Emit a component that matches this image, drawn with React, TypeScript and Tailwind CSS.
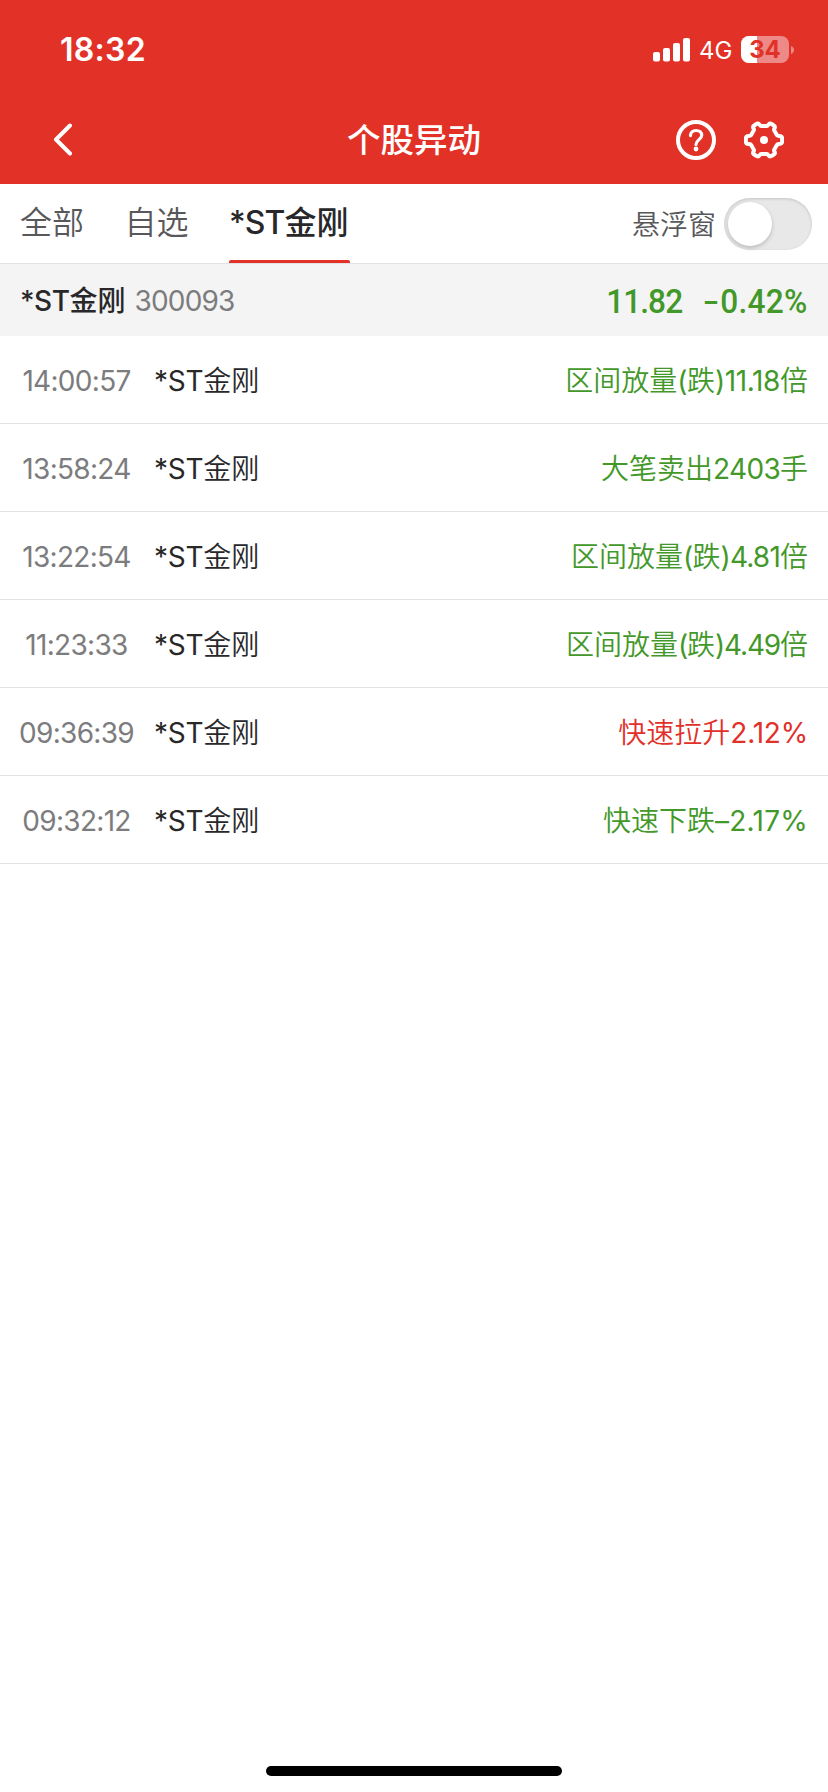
import React from "react";

type Movement = { time: string; name: string; event: string; rising: boolean; tracking: string };

const movements: Movement[] = [
  { time: "14:00:57", name: "*ST金刚", event: "区间放量(跌)11.18倍", rising: false, tracking: "tracking-[-0.4px]" },
  { time: "13:58:24", name: "*ST金刚", event: "大笔卖出2403手", rising: false, tracking: "tracking-[-0.7px]" },
  { time: "13:22:54", name: "*ST金刚", event: "区间放量(跌)4.81倍", rising: false, tracking: "tracking-[-0.8px]" },
  { time: "11:23:33", name: "*ST金刚", event: "区间放量(跌)4.49倍", rising: false, tracking: "tracking-[-1.2px]" },
  { time: "09:36:39", name: "*ST金刚", event: "快速拉升2.12%", rising: true, tracking: "tracking-[-0.2px]" },
  { time: "09:32:12", name: "*ST金刚", event: "快速下跌–2.17%", rising: false, tracking: "tracking-[0.25px]" },
];

/** Styles the Latin runs of a mixed string and leaves the Chinese runs alone. */
function Mixed({ text, latin }: { text: string; latin: string }) {
  return (
    <>
      {text.split(/([^\u4e00-\u9fff]+)/).map((run, i) =>
        i % 2 ? (
          <span key={i} className={latin}>
            {run}
          </span>
        ) : (
          run
        ),
      )}
    </>
  );
}

function StatusBar() {
  return (
    <div className="flex h-[96px] items-center justify-between pl-[60px] pr-[34px] pt-[3px] text-white">
      <span className="text-[32px] font-semibold leading-none tracking-[0.3px]">18:32</span>
      <div className="flex items-center">
        <svg width="38" height="24" viewBox="0 0 38 24" fill="#fff">
          <rect x="0" y="14" width="7" height="9.500" rx="2" />
          <rect x="10" y="10" width="7" height="13.500" rx="2" />
          <rect x="20" y="5" width="7" height="18.500" rx="2" />
          <rect x="30" y="0" width="7" height="23.500" rx="2" />
        </svg>
        <span className="ml-[8px] w-[34px] pt-[2px] text-[24px] leading-none">4G</span>
        <div className="relative ml-[8px] flex h-[27px] w-[48px] items-center justify-center overflow-hidden rounded-[8px] bg-[#ed8a87]">
          <div className="absolute inset-y-0 left-0 w-[16px] bg-white" />
          <span className="relative text-[24px] font-bold leading-none text-[#e23228]">34</span>
        </div>
        <svg className="ml-[2px]" width="3" height="8" viewBox="0 0 3 8">
          <path d="M0 0c2 .8 3 2.300 3 4s-1 3.200-3 4z" fill="#ed8a87" />
        </svg>
      </div>
    </div>
  );
}

function NavBar() {
  return (
    <div className="grid h-[88px] grid-cols-[1fr_auto_1fr] items-center text-white">
      <svg className="ml-[52px]" width="22" height="34" viewBox="0 0 22 34" fill="none">
        <path d="M18 2.500 4 16.500l14 14" stroke="#fff" strokeWidth="4" strokeLinecap="round" strokeLinejoin="round" />
      </svg>
      <h1 className="pt-[2px] text-[33.500px] font-medium leading-none">个股异动</h1>
      <div className="flex items-center justify-end gap-[28px] pr-[44px]">
        <svg width="40" height="40" viewBox="0 0 40 40" fill="none" stroke="#fff">
          <circle cx="20" cy="20" r="18" strokeWidth="4" />
          <path
            d="M14.500 15.600c0-3.200 2.300-5.100 5.600-5.100s5.600 1.900 5.600 4.800c0 4.300-5.700 4.400-5.700 9.200"
            strokeWidth="3.200"
            strokeLinecap="round"
          />
          <circle cx="20" cy="29" r="2.400" fill="#fff" stroke="none" />
        </svg>
        <svg width="40" height="40" viewBox="0 0 40 40" fill="none" stroke="#fff">
          <path
            d="M17 6h6c1.200 0 1.500-2.400 3-2.400 1.200 0 4.600 1.900 4.900 3 .4 1.300-1.300 2.400-.8 3.500l2.900 5.200c.7 1.100 4.500.2 4.900 2 .2 1 .2 4.400 0 5.400-.4 1.800-4.200.9-4.900 2l-2.900 5.200c-.5 1.100 1.200 2.200.8 3.500-.3 1.100-3.700 3-4.900 3-1.500 0-1.800-2.400-3-2.400h-6c-1.200 0-1.500 2.400-3 2.400-1.200 0-4.600-1.900-4.900-3-.4-1.300 1.300-2.400.8-3.500l-2.900-5.200c-.7-1.100-4.500-.2-4.900-2-.2-1-.2-4.400 0-5.400.4-1.800 4.200-.9 4.900-2l2.900-5.200c.5-1.100-1.200-2.200-.8-3.500.3-1.100 3.700-3 4.900-3 1.500 0 1.800 2.400 3 2.400z"
            strokeWidth="4"
            strokeLinejoin="round"
          />
          <circle cx="20" cy="20" r="4" fill="#fff" stroke="none" />
        </svg>
      </div>
    </div>
  );
}

function Tabs() {
  return (
    <div className="flex h-[80px] border-b border-[#e2e2e4] pl-[20px] pr-[16px] text-[#58585a]">
      <nav className="flex flex-1 gap-[40.500px] text-[32px] leading-[78px]">
        <span className="font-[350]">全部</span>
        <span className="font-[350]">自选</span>
        <span className="relative font-medium text-[#28282a]">
          <Mixed text="*ST金刚" latin="tracking-[-0.9px]" />
          <i className="absolute bottom-0 left-0 h-[3px] w-[121px] rounded-t-[2px] bg-[#e23228]" />
        </span>
      </nav>
      <div className="flex items-center gap-[8px]">
        <span className="pt-[2px] text-[28px] font-[350] leading-none">悬浮窗</span>
        <div className="h-[52px] w-[88px] rounded-full bg-[#e8e8e8] px-[4px] py-[4px] shadow-[inset_0_1px_3px_rgba(0,0,0,0.16)]">
          <div className="size-[44px] rounded-full bg-white shadow-[0_2px_4px_rgba(0,0,0,0.2)]" />
        </div>
      </div>
    </div>
  );
}

function Quote() {
  return (
    <div className="flex h-[72px] items-center bg-[#f4f4f4] pl-[20px] pr-[20px] pt-[2px] leading-none">
      <span className="text-[28px] font-medium text-[#28282a]">
        <Mixed text="*ST金刚" latin="tracking-[-0.5px]" />
      </span>
      <span className="ml-[9px] flex-1 text-[28px] tracking-[-0.8px] text-[#7c7c7e]">300093</span>
      <div className="flex origin-right scale-x-[0.93] gap-[28px] font-['Roboto'] text-[34px] font-medium text-[#43982a]">
        <span className="tracking-[-1px]">11.82</span>
        <span className="tracking-[0.3px]">
          <span className="mr-[1px] inline-block origin-right scale-x-[1.5]">-</span>0.42%
        </span>
      </div>
    </div>
  );
}

function Row({ item }: { item: Movement }) {
  return (
    <li className="flex h-[88px] items-center border-b border-[#e2e2e4] pr-[20px] pt-[2px] text-[28px] leading-none text-[#28282a]">
      <span className="w-[153px] text-center tracking-[-0.7px] text-[#7c7c7e]">{item.time}</span>
      <span className="ml-[1px] flex-1 font-[350]">
        <Mixed text={item.name} latin="font-normal tracking-[-0.3px]" />
      </span>
      <span className={item.rising ? "font-[350] text-[#e2302a]" : "font-[350] text-[#43982a]"}>
        <Mixed text={item.event} latin={"font-normal " + item.tracking} />
      </span>
    </li>
  );
}

export default function App() {
  return (
    <div className="flex h-[1792px] w-[828px] flex-col bg-white font-['Inter','Noto_Sans_CJK_SC',sans-serif]">
      <header className="bg-[#e23228]">
        <StatusBar />
        <NavBar />
      </header>
      <Tabs />
      <Quote />
      <ul className="flex-1">
        {movements.map((m) => (
          <Row key={m.time} item={m} />
        ))}
      </ul>
      <div className="mb-[16px] ml-[266px] h-[10px] w-[296px] rounded-full bg-black" />
    </div>
  );
}
